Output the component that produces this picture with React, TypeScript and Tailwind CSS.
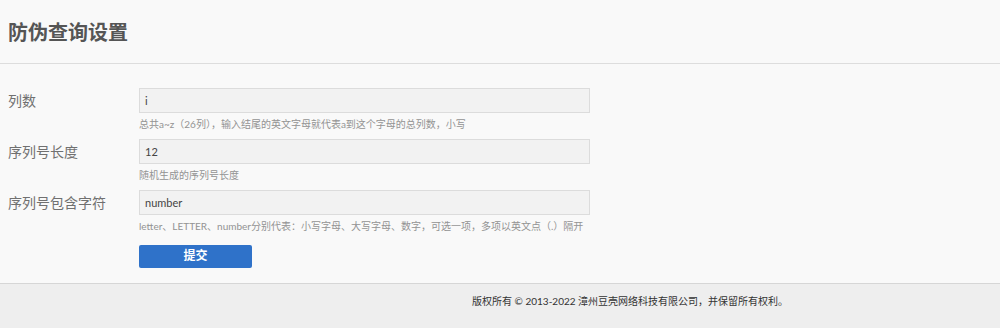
import React from "react";

const rows = [
  {
    label: "列数",
    value: "i",
    help: "总共a~z（26列），输入结尾的英文字母就代表a到这个字母的总列数，小写",
  },
  { label: "序列号长度", value: "12", help: "随机生成的序列号长度" },
  {
    label: "序列号包含字符",
    value: "number",
    help: "letter、LETTER、number分别代表：小写字母、大写字母、数字，可选一项，多项以英文点（.）隔开",
  },
];

export default function App() {
  return (
    <div className="flex h-[328px] flex-col bg-[#f9f9f9] font-['Lato','Noto_Sans_CJK_SC',sans-serif]">
      <header className="flex h-[64px] items-center border-b border-[#dddddd] px-2">
        <h1 className="text-[20px] font-bold text-[#555555]">防伪查询设置</h1>
      </header>

      <form className="flex-1 pt-[24px]" onSubmit={(e) => e.preventDefault()}>
        {rows.map((row) => (
          <div key={row.label} className="mb-[8px] flex">
            <label className="h-[25px] w-[139px] shrink-0 pl-2 text-[14px] leading-[25px] text-[#707070]">
              {row.label}
            </label>
            <div>
              <input
                readOnly
                value={row.value}
                className="block h-[25px] w-[451px] border border-[#dcdcdc] bg-[#f2f2f2] px-[5px] text-[11px] text-[#444444] outline-none"
              />
              <p className="mt-[4px] text-[10px] leading-[14px] text-[#939393]">{row.help}</p>
            </div>
          </div>
        ))}
        <div className="pl-[139px] pt-[1px]">
          <button
            type="submit"
            className="h-[23px] w-[113px] rounded-[2px] bg-[#2f72c9] text-[12px] font-bold text-white"
          >
            提交
          </button>
        </div>
      </form>

      <footer className="h-[45px] border-t border-[#d6d6d6] bg-[#eeeeee] pl-[472px] pt-[11px]">
        <p className="text-[10px] leading-[12px] text-[#333333]">
          版权所有 © 2013-2022 漳州豆壳网络科技有限公司，并保留所有权利。
        </p>
      </footer>
    </div>
  );
}
